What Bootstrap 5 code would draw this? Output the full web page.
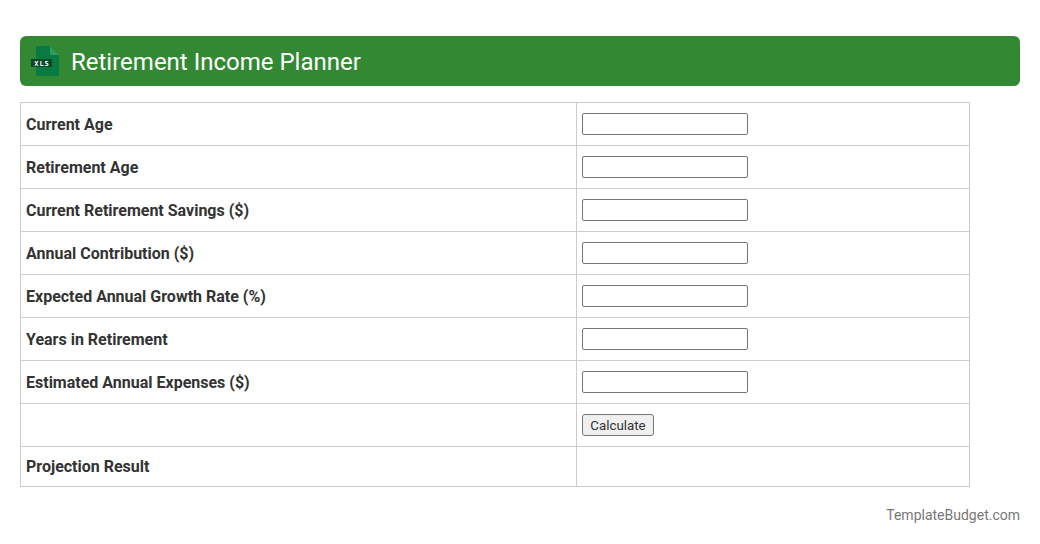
<!DOCTYPE html>
<html lang="en">
<head>
    <meta charset="UTF-8">
    <meta name="viewport" content="width=device-width, initial-scale=1">
    <title>Retirement Income Planner</title>
    <link href="https://cdn.jsdelivr.net/npm/bootstrap@5.3.3/dist/css/bootstrap.min.css" rel="stylesheet">
    <style>
        body { font-family: Roboto, "Liberation Sans", sans-serif; color: #333; background: #fff; }
        .page-wrap { padding: 36px 20px 0; }
        .title-bar { background: #338833; height: 50px; padding-left: 9px; color: #fff; }
        .title-bar h1 { font-size: 24px; font-weight: 400; line-height: 1; padding-top: 2px; }
        .planner-table { width: 950px; border-collapse: collapse; margin-top: 16px; table-layout: fixed; }
        .planner-table td { border: 1px solid #ccc; padding: 6px 5px 4px; height: 43px; font-size: 16px; vertical-align: middle; }
        .planner-table td.field-cell { padding: 5px; }
        .planner-table tr:last-child td { height: 40px; padding: 5px; }
        .planner-table .label-cell { width: 556px; font-weight: 700; }
        .plain-input { display: block; width: 166px; height: 22px; padding: 1px 2px; border: 1px solid #767676; border-radius: 2px; background: #fff; }
        .plain-btn { display: block; width: 72px; height: 22px; padding: 1px 0 0; font-size: 13.33px; line-height: 20px; color: #333; background: #efefef; border: 1px solid #767676; border-radius: 3px; }
        .site-credit { margin-top: 18px; font-size: 14px; line-height: 20px; color: #777; }
    </style>
</head>
<body>
    <div class="page-wrap">
        <div class="title-bar d-flex align-items-center rounded gap-2">
            <svg width="34" height="32" viewBox="0 0 34 32" class="flex-shrink-0">
                <path d="M7 2.500a1.500 1.500 0 0 1 1.500-1.500H21l9 9v19.500a1.500 1.500 0 0 1-1.500 1.500H8.500A1.500 1.500 0 0 1 7 29.500z" fill="#087a42"/>
                <path d="M21 1l9 9h-7.500a1.500 1.500 0 0 1-1.500-1.500z" fill="#2f9a5c"/>
                <rect x="2" y="14" width="21" height="8" fill="#06482a"/>
                <text x="13" y="20.700" font-size="7" letter-spacing="1" font-weight="700" font-family="DejaVu Sans Mono, monospace" text-anchor="middle" fill="#fff">XLS</text>
            </svg>
            <h1 class="m-0">Retirement Income Planner</h1>
        </div>

        <table class="planner-table">
            <tr><td class="label-cell">Current Age</td><td class="field-cell"><input type="text" class="plain-input"></td></tr>
            <tr><td class="label-cell">Retirement Age</td><td class="field-cell"><input type="text" class="plain-input"></td></tr>
            <tr><td class="label-cell">Current Retirement Savings ($)</td><td class="field-cell"><input type="text" class="plain-input"></td></tr>
            <tr><td class="label-cell">Annual Contribution ($)</td><td class="field-cell"><input type="text" class="plain-input"></td></tr>
            <tr><td class="label-cell">Expected Annual Growth Rate (%)</td><td class="field-cell"><input type="text" class="plain-input"></td></tr>
            <tr><td class="label-cell">Years in Retirement</td><td class="field-cell"><input type="text" class="plain-input"></td></tr>
            <tr><td class="label-cell">Estimated Annual Expenses ($)</td><td class="field-cell"><input type="text" class="plain-input"></td></tr>
            <tr><td class="label-cell"></td><td class="field-cell"><button type="button" class="plain-btn">Calculate</button></td></tr>
            <tr><td class="label-cell">Projection Result</td><td class="field-cell"></td></tr>
        </table>

        <div class="site-credit text-end">TemplateBudget.com</div>
    </div>
    <script src="https://cdn.jsdelivr.net/npm/bootstrap@5.3.3/dist/js/bootstrap.bundle.min.js"></script>
</body>
</html>
